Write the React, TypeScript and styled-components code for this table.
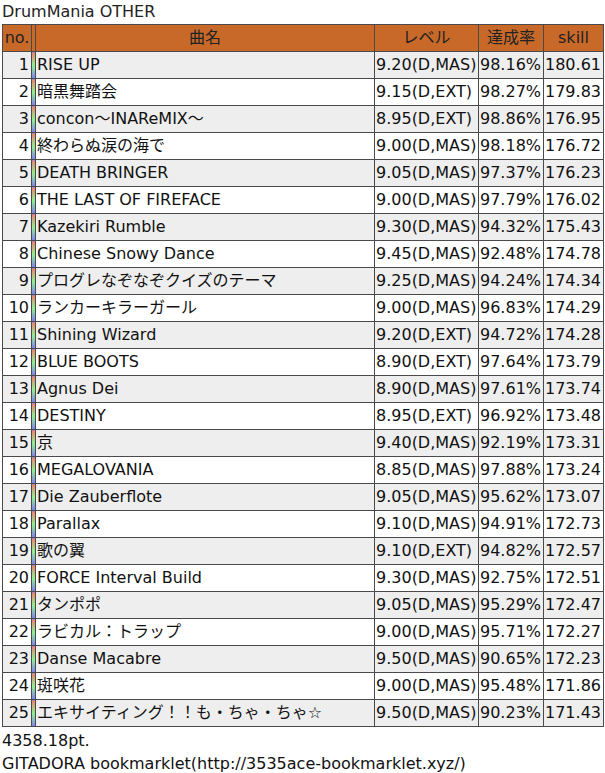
import React from "react";
import styled, { createGlobalStyle } from "styled-components";

const GlobalStyle = createGlobalStyle`
  html, body {
    margin: 0;
    padding: 0;
    background: #ffffff;
  }
  body {
    font-family: "DejaVu Sans", "Noto Sans CJK JP", sans-serif;
    font-size: 16px;
    color: #111;
  }
`;

const Page = styled.div`
  padding: 0 2px;
`;

const Title = styled.div`
  line-height: 24px;
  height: 24px;
  color: #222;
`;

const Table = styled.table`
  border-collapse: collapse;
  table-layout: fixed;
  width: 602px;
`;

const HeadCell = styled.th`
  background: #c8692a;
  border: 1px solid #4a4a4a;
  font-weight: normal;
  color: #222;
  height: 26px;
  line-height: 26px;
  padding: 0 1px;
  text-align: center;
  white-space: nowrap;
  overflow: hidden;
`;

const Row = styled.tr<{ $odd: boolean }>`
  background: ${(p) => (p.$odd ? "#eeeeee" : "#ffffff")};
`;

const Cell = styled.td<{ $align?: "left" | "right" }>`
  border: 1px solid #4a4a4a;
  height: 26px;
  line-height: 26px;
  padding: 0 1px;
  text-align: ${(p) => p.$align ?? "left"};
  white-space: nowrap;
  overflow: hidden;
  color: #111;
`;

const NoCell = styled(Cell)`
  padding-right: 2px;
`;

const StripeCell = styled.td`
  border: 1px solid #4a4a4a;
  padding: 0;
  background: linear-gradient(to bottom, #f08070 0%, #90f090 50%, #8080f0 100%);
`;

const FooterBlock = styled.div`
  padding-top: 2px;
  line-height: 23px;
  color: #111;
`;

type Song = [string, string, string, string];

const songs: Song[] = [
  ["RISE UP", "9.20(D,MAS)", "98.16%", "180.61"],
  ["暗黒舞踏会", "9.15(D,EXT)", "98.27%", "179.83"],
  ["concon～INAReMIX～", "8.95(D,EXT)", "98.86%", "176.95"],
  ["終わらぬ涙の海で", "9.00(D,MAS)", "98.18%", "176.72"],
  ["DEATH BRINGER", "9.05(D,MAS)", "97.37%", "176.23"],
  ["THE LAST OF FIREFACE", "9.00(D,MAS)", "97.79%", "176.02"],
  ["Kazekiri Rumble", "9.30(D,MAS)", "94.32%", "175.43"],
  ["Chinese Snowy Dance", "9.45(D,MAS)", "92.48%", "174.78"],
  ["プログレなぞなぞクイズのテーマ", "9.25(D,MAS)", "94.24%", "174.34"],
  ["ランカーキラーガール", "9.00(D,MAS)", "96.83%", "174.29"],
  ["Shining Wizard", "9.20(D,EXT)", "94.72%", "174.28"],
  ["BLUE BOOTS", "8.90(D,EXT)", "97.64%", "173.79"],
  ["Agnus Dei", "8.90(D,MAS)", "97.61%", "173.74"],
  ["DESTINY", "8.95(D,EXT)", "96.92%", "173.48"],
  ["京", "9.40(D,MAS)", "92.19%", "173.31"],
  ["MEGALOVANIA", "8.85(D,MAS)", "97.88%", "173.24"],
  ["Die Zauberflote", "9.05(D,MAS)", "95.62%", "173.07"],
  ["Parallax", "9.10(D,MAS)", "94.91%", "172.73"],
  ["歌の翼", "9.10(D,EXT)", "94.82%", "172.57"],
  ["FORCE Interval Build", "9.30(D,MAS)", "92.75%", "172.51"],
  ["タンポポ", "9.05(D,MAS)", "95.29%", "172.47"],
  ["ラビカル：トラップ", "9.00(D,MAS)", "95.71%", "172.27"],
  ["Danse Macabre", "9.50(D,MAS)", "90.65%", "172.23"],
  ["斑咲花", "9.00(D,MAS)", "95.48%", "171.86"],
  ["エキサイティング！！も・ちゃ・ちゃ☆", "9.50(D,MAS)", "90.23%", "171.43"],
];

export default function App() {
  return (
    <Page>
      <GlobalStyle />
      <Title>DrumMania OTHER</Title>
      <Table>
        <colgroup>
          <col style={{ width: 29 }} />
          <col style={{ width: 4 }} />
          <col style={{ width: 339 }} />
          <col style={{ width: 104 }} />
          <col style={{ width: 65 }} />
          <col style={{ width: 60 }} />
        </colgroup>
        <thead>
          <tr>
            <HeadCell>no.</HeadCell>
            <HeadCell />
            <HeadCell>曲名</HeadCell>
            <HeadCell>レベル</HeadCell>
            <HeadCell>達成率</HeadCell>
            <HeadCell>skill</HeadCell>
          </tr>
        </thead>
        <tbody>
          {songs.map(([name, level, rate, skill], i) => (
            <Row key={i} $odd={i % 2 === 0}>
              <NoCell $align="right">{i + 1}</NoCell>
              <StripeCell />
              <Cell>{name}</Cell>
              <Cell>{level}</Cell>
              <Cell>{rate}</Cell>
              <Cell>{skill}</Cell>
            </Row>
          ))}
        </tbody>
      </Table>
      <FooterBlock>
        4358.18pt.
        <br />
        GITADORA bookmarklet(http://3535ace-bookmarklet.xyz/)
      </FooterBlock>
    </Page>
  );
}
